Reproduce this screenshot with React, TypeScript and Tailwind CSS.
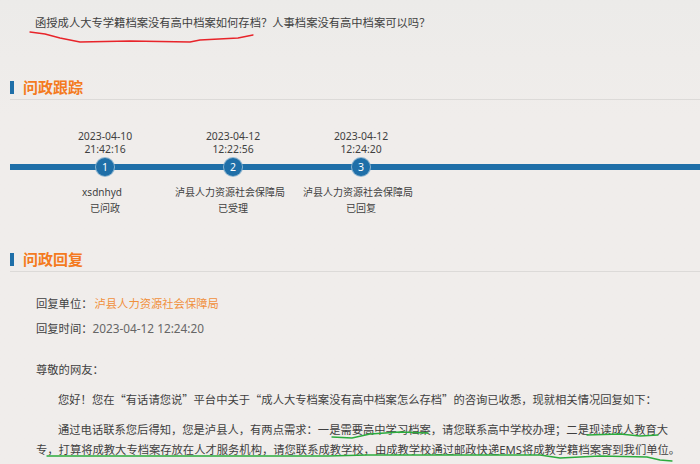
const steps = [
  { time: ["2023-04-10", "21:42:16"], who: "xsdnhyd", status: "已问政" },
  { time: ["2023-04-12", "12:22:56"], who: "泸县人力资源社会保障局", status: "已受理" },
  { time: ["2023-04-12", "12:24:20"], who: "泸县人力资源社会保障局", status: "已回复" },
];

function SectionTitle({ title }: { title: string }) {
  return (
    <div className="flex h-[24px] items-center gap-[9px] border-b border-[#dcdad8]">
      <span className="h-[13px] w-[4px] bg-[#1f6fa8]" />
      <h2 className="mb-[2px] text-[15px] leading-[20px] font-bold text-[#f47a20]">{title}</h2>
    </div>
  );
}

// hand drawn marks on top of the screenshot
function Scribbles() {
  return (
    <svg className="absolute inset-0" width="700" height="464" fill="none" strokeLinecap="round" strokeLinejoin="round">
      <path d="M30 32 L45 34 L60 38 L80 42 L130 41 L190 42 L200 40 L238 38 L253 35" stroke="#e8242a" strokeWidth="1.3" />
      <path d="M332 437 L352 438 L370 434 L400 432 L428 433" stroke="#2bab3c" strokeWidth="1.3" />
      <path d="M587 435 L620 434 L640 436 L658 435" stroke="#2bab3c" strokeWidth="1.3" />
      <path d="M47 456 L328 456 L367 455 L540 455 L560 458 L600 456 L647 457 L660 460 L672 461" stroke="#2bab3c" strokeWidth="1.3" />
    </svg>
  );
}

export default function App() {
  return (
    <div className="relative h-[464px] w-[700px] overflow-hidden bg-[#f0edeb] bg-linear-to-b from-[#ecebe9] to-[#f0edeb] to-[25%] font-['Noto_Sans','Noto_Sans_CJK_SC',sans-serif] text-[11.3px] text-[#3f3f3f]">
      <p className="pt-[15px] pl-[35px] leading-[16px]">函授成人大专学籍档案没有高中档案如何存档？人事档案没有高中档案可以吗？</p>

      <div className="mt-[45px] ml-[10px]">
        <SectionTitle title="问政跟踪" />
      </div>

      <div className="relative mt-[30px] ml-[10px] flex pl-[31px]">
        <div className="absolute top-[34px] right-0 left-0 h-[6px] bg-[#1f6fa8]" />
        {steps.map((s, i) => (
          <div key={i} className="relative flex w-[128px] flex-col items-center text-center text-[10.4px] leading-[13px]">
            <span>{s.time[0]}</span>
            <span>{s.time[1]}</span>
            <span className="mt-[2px] flex h-[18px] w-[18px] items-center justify-center rounded-full bg-[#1f6fa8] text-[10.5px] text-white ring-1 ring-[#8fb6d0]">
              {i + 1}
            </span>
            <span className="mt-[9px] pr-[6px] text-[10px] leading-[15px] whitespace-nowrap">{s.who}</span>
            <span className="text-[10px] leading-[16px]">{s.status}</span>
          </div>
        ))}
      </div>

      <div className="mt-[32px] ml-[10px]">
        <SectionTitle title="问政回复" />
      </div>

      <div className="pt-[19px] pl-[36px] leading-[25px]">
        <p>
          回复单位：<span className="ml-[2px] text-[#f0903c]">泸县人力资源社会保障局</span>
        </p>
        <p>
          回复时间：<span className="text-[11.8px] text-[#666]">2023-04-12 12:24:20</span>
        </p>
        <p className="mt-[16px]">尊敬的网友：</p>
        <p className="mt-[5px] pl-[22px] font-['Noto_Sans_CJK_SC',sans-serif]">
          您好！您在“有话请您说”平台中关于“成人大专档案没有高中档案怎么存档”的咨询已收悉，现就相关情况回复如下：
        </p>
        <p className="mt-[8px] leading-[20px] indent-[22px] whitespace-nowrap">
          通过电话联系您后得知，您是泸县人，有两点需求：一是需要高中学习档案，请您联系高中学校办理；二是现读成人教育大
          <br />
          <span className="inline-block indent-0">专，打算将成教大专档案存放在人才服务机构，请您联系成教学校，由成教学校通过邮政快递EMS将成教学籍档案寄到我们单位。</span>
        </p>
      </div>

      <Scribbles />
    </div>
  );
}
